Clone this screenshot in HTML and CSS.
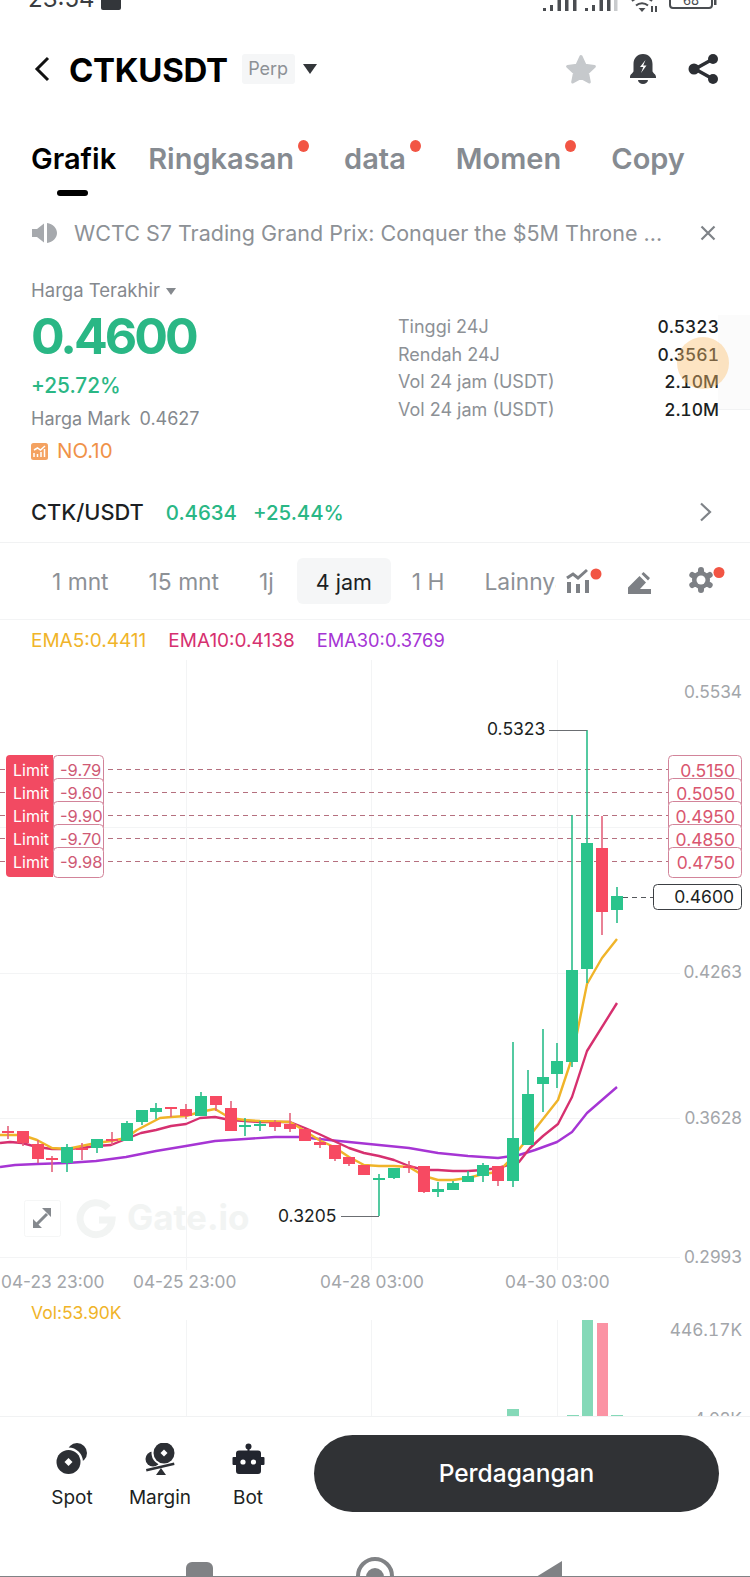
FILE: index.html
```html
<!DOCTYPE html>
<html lang="en">
<head>
  <meta charset="UTF-8" />
  <meta name="viewport" content="width=device-width, initial-scale=1.0"/>
  <title>CTKUSDT</title>
  <link rel="stylesheet" href="styles.css">
</head>

<body>
  <div class="page">
    <div class="status">
      <span class="status-time">23:54</span>
      <span class="status-note"></span>
      <svg class="status-icons" width="174" height="12" viewBox="0 0 174 12">
        <path class="status-fill" d="M0 8h3v3H0zM7 5h3v6H7zM14.500 0h3.500v11h-3.500zM22 0h3.500v11H22zM30 0h3.500v11H30zM42 8h3v3h-3zM49 5h3v6h-3zM56.500 0h3.500v11h-3.500zM64 0h3.500v11H64z"/>
        <path class="status-faint" d="M71 0h3.500v11H71z"/>
        <path class="status-line" d="M89 1a16 16 0 0 1 20 0M93 5.500a9 9 0 0 1 12 0"/>
        <path class="status-fill" d="M95.500 8h7l-3.500 4zM108 6h2v6h-2zM112 6h2v6h-2z"/>
        <path class="status-line" d="M130 -3h36a3 3 0 0 1 3 3v5a3 3 0 0 1-3 3h-36a3 3 0 0 1-3-3v-5a3 3 0 0 1 3-3z"/>
        <path class="status-fill" d="M171 0h2.500v5H171z"/>
        <text class="status-batt" x="148" y="5">68</text>
      </svg>
    </div>

    <header class="topbar">
      <svg class="back" width="18" height="26" viewBox="0 0 18 26"><path d="M15 2L4 13l11 11"/></svg>
      <h1 class="symbol">CTKUSDT</h1>
      <span class="chip">Perp</span>
      <span class="caret"></span>
      <div class="topbar-icons">
        <svg width="34" height="32" viewBox="0 0 34 32"><path class="star" d="M17 3.500l4 8.700 9.400 1.200-6.900 6.400 1.800 9.200-8.300-4.600-8.300 4.600 1.800-9.200-6.900-6.400 9.400-1.200z"/></svg>
        <svg width="28" height="30" viewBox="0 0 28 30"><path class="bell" d="M14 0c6 0 9.500 4.500 9.500 10v7c0 2 3.500 3 3.500 6v1H1v-1c0-3 3.500-4 3.500-6v-7C4.500 4.500 8 0 14 0zM9 26h10a5 4 0 0 1-10 0z"/><path class="bolt" d="M16.500 6l-5.500 7h3.300L12 19l5.500-7.500h-3.300z"/></svg>
        <svg width="30" height="30" viewBox="0 0 30 30"><path class="share-line" d="M25 5L7 15l18 10"/><circle class="dark" cx="25" cy="5" r="5"/><circle class="dark" cx="6" cy="15" r="5.500"/><circle class="dark" cx="25" cy="25" r="5"/></svg>
      </div>
    </header>

    <nav class="tabs">
      <a class="tab tab-active">Grafik</a>
      <a class="tab tab-dot">Ringkasan</a>
      <a class="tab tab-dot">data</a>
      <a class="tab tab-dot">Momen</a>
      <a class="tab">Copy</a>
    </nav>

    <div class="notice">
      <svg width="25" height="20" viewBox="0 0 25 20"><path class="speaker" d="M0 6h5l7-5.500v19L5 14H0zM15 0c6 1 10 5 10 10s-4 9-10 10z"/></svg>
      <span class="notice-text">WCTC S7 Trading Grand Prix: Conquer the $5M Throne ...</span>
      <svg class="notice-close" width="16" height="16" viewBox="0 0 16 16"><path d="M1.500 1.500l13 13M14.500 1.500l-13 13"/></svg>
    </div>

    <section class="market">
      <div class="price-col">
        <div class="price-label">Harga Terakhir <span class="caret caret-small"></span></div>
        <div class="price">0.4600</div>
        <div class="change">+25.72%</div>
        <div class="mark">Harga Mark<span class="mark-value">0.4627</span></div>
        <div class="rank">
          <svg width="17" height="17" viewBox="0 0 17 17"><rect class="rank-bg" width="17" height="17" rx="2.500"/><path class="rank-bars" d="M3 14v-4M6.500 14v-3M10 14V9M13.500 14V6M3 7l3.500-2 3 2 4.500-4"/></svg>
          NO.10
        </div>
      </div>
      <div class="stats">
        <div class="stat"><span>Tinggi 24J</span><b>0.5323</b></div>
        <div class="stat"><span>Rendah 24J</span><b>0.3561</b></div>
        <div class="stat"><span>Vol 24 jam (USDT)</span><b>2.10M</b></div>
        <div class="stat"><span>Vol 24 jam (USDT)</span><b>2.10M</b></div>
      </div>
    </section>

    <div class="pair">
      <span class="pair-name">CTK/USDT</span>
      <span class="pair-value">0.4634</span>
      <span class="pair-value">+25.44%</span>
      <svg class="pair-arrow" width="13" height="20" viewBox="0 0 13 20"><path d="M2 1.500L11 10l-9 8.500"/></svg>
    </div>

    <div class="periods">
      <div class="period-list">
        <span class="period">1 mnt</span>
        <span class="period">15 mnt</span>
        <span class="period">1j</span>
        <span class="period period-active">4 jam</span>
        <span class="period">1 H</span>
        <span class="period">Lainnya</span>
      </div>
      <div class="period-tools">
        <svg class="tool-bars" width="38" height="26" viewBox="0 0 38 26"><path class="tool-line" d="M1 10l6-4 5 4 9-8"/><path class="tool-bar" d="M1 14h4v11H1zM10 16h4v9h-4zM19 12h4v13h-4z"/><circle class="dot" cx="30" cy="6" r="5.500"/></svg>
        <svg class="tool-pen" width="24" height="22" viewBox="0 0 24 22"><path class="tool-bar" d="M0 22v-6.500L11.500 4l6.500 6.500-6 6.500h11v5zM13.500 2L15.500 0 22 6l-2 2.500z"/></svg>
        <svg class="tool-gear" width="38" height="26" viewBox="0 0 38 26"><path class="tool-teeth" d="M12 3v20M3.300 8l17.400 10M3.300 18l17.400-10"/><circle class="tool-bar" cx="12" cy="13" r="9"/><circle class="bolt" cx="12" cy="13" r="4.500"/><circle class="dot" cx="30" cy="5.500" r="5.500"/></svg>
      </div>
    </div>

    <div class="ema">
      <span class="ema5">EMA5:0.4411</span>
      <span class="ema10">EMA10:0.4138</span>
      <span class="ema30">EMA30:0.3769</span>
    </div>

    <svg class="chart" width="750" height="756" viewBox="0 660 750 756">
      <path class="grid" d="M186.500 660V1270M371.500 660V1270M557.500 660V1270M186.500 1320V1416M371.500 1320V1416M557.500 1320V1416M0 827.500H680M0 973.500H680M0 1118.500H680M0 1257.500H680"/>

      <text class="watermark" x="127" y="1230">Gate.io</text>
      <path class="watermark-logo" d="M108 1208a16 16 0 1 0 4 12h-13"/>
      <rect class="expand-box" x="24.500" y="1200.500" width="36" height="36" rx="2"/>
      <path class="expand-stem" d="M37 1224l10-10"/>
      <path class="expand-head" d="M42 1208h9v9zM33 1219v9h9z"/>

      <path class="limit-line" d="M0 769.500H668M0 792.500H668M0 815.500H668M0 838.500H668M0 861.500H668"/>

      <polyline class="line-ema30" points="0,1167 15,1165 37,1164 67,1163 96,1161 126,1157 156,1151 186,1146 215,1141 245,1139 275,1137 300,1137 319,1139 349,1142 379,1145 409,1148 438,1153 468,1156 498,1158 519,1155 535,1150 557,1142 572,1132 587,1113 617,1087"/>
      <polyline class="line-ema10" points="0,1143 10,1142 22,1143 37,1147 52,1149 67,1149 81,1148 96,1146 111,1145 126,1139 141,1133 156,1130 171,1126 186,1124 200,1118 215,1117 230,1120 245,1121 260,1122 290,1122 305,1128 319,1134 334,1141 349,1148 364,1153 379,1156 394,1160 409,1166 424,1170 438,1170 453,1171 468,1171 483,1170 498,1168 519,1162 530,1148 543,1136 558,1124 572,1097 587,1051 617,1003"/>
      <polyline class="line-ema5" points="0,1135 22,1135 37,1140 52,1148 67,1149 96,1143 111,1141 126,1138 137,1130 160,1118 171,1117 186,1116 200,1112 215,1109 230,1118 245,1120 260,1121 290,1122 305,1131 319,1140 334,1147 349,1157 364,1165 379,1166 394,1166 409,1167 424,1176 438,1180 453,1180 468,1178 483,1174 498,1172 513,1157 528,1138 543,1119 558,1100 572,1058 587,984 602,958 617,939"/>

      <path class="wick-up" d="M67 1144V1172M97 1139V1153M127 1121V1141M142 1110V1125M156 1103V1119M201 1092V1116M245 1118V1136M260 1121V1131M379 1174V1216M394 1168V1179M438 1182V1197M453 1181V1190M468 1171V1182M483 1163V1182M513 1042V1187M528 1070V1145M543 1029V1112M557 1043V1088M572 815V1067M587 730V983M617 887V923"/>
      <path class="wick-down" d="M8 1126V1139M23 1131V1146M38 1140V1163M52 1156V1172M82 1143V1160M112 1132V1145M171 1107V1117M186 1104V1119M216 1096V1111M231 1101V1131M275 1120V1131M290 1113V1132M320 1137V1148M335 1145V1161M349 1157V1166M409 1161V1173M424 1166V1193M498 1166V1186M602 816V935"/>
      <path class="body-up" d="M61 1147h12V1163h-12zM91 1139h12V1148h-12zM121 1123h12V1141h-12zM136 1110h12V1122h-12zM150 1108h12V1112h-12zM195 1096h12V1116h-12zM239 1125h12V1127h-12zM254 1124h12V1126h-12zM373 1178h12V1180h-12zM388 1168h12V1178h-12zM432 1189h12V1192h-12zM447 1183h12V1190h-12zM462 1176h12V1182h-12zM477 1165h12V1176h-12zM507 1138h12V1181h-12zM522 1094h12V1145h-12zM537 1077h12V1084h-12zM551 1061h12V1074h-12zM566 970h12V1062h-12zM581 843h12V969h-12zM611 896h12V910h-12z"/>
      <path class="body-down" d="M2 1131h12V1133H2zM17 1131h12V1143H17zM32 1144h12V1159H32zM46 1158h12V1160H46zM76 1148h12V1150H76zM106 1139h12V1141h-12zM165 1107h12V1109h-12zM180 1109h12V1116h-12zM210 1096h12V1105h-12zM225 1108h12V1131h-12zM269 1122h12V1127h-12zM284 1124h12V1129h-12zM299 1129h12V1141h-12zM314 1142h12V1145h-12zM329 1145h12V1159h-12zM343 1157h12V1164h-12zM358 1165h12V1175h-12zM403 1166h12V1168h-12zM418 1166h12V1192h-12zM492 1166h12V1181h-12zM596 848h12V912h-12z"/>

      <path class="extreme" d="M549 730.500H587M341 1216.500H379"/>
      <text class="label-dark" x="487" y="735">0.5323</text>
      <text class="label-dark" x="278" y="1222">0.3205</text>

      <rect class="limit-box" x="53.500" y="755.500" width="50" height="30" rx="4"/>
      <rect class="limit-box" x="53.500" y="778.500" width="50" height="30" rx="4"/>
      <rect class="limit-box" x="53.500" y="801.500" width="50" height="30" rx="4"/>
      <rect class="limit-box" x="53.500" y="824.500" width="50" height="30" rx="4"/>
      <rect class="limit-box" x="53.500" y="847.500" width="50" height="30" rx="4"/>
      <path class="limit-tag" d="M10 755h43v122H10a4 4 0 0 1-4-4V759a4 4 0 0 1 4-4z"/>
      <text class="limit-name" x="13" y="776">Limit</text>
      <text class="limit-name" x="13" y="799">Limit</text>
      <text class="limit-name" x="13" y="822">Limit</text>
      <text class="limit-name" x="13" y="845">Limit</text>
      <text class="limit-name" x="13" y="868">Limit</text>
      <text class="limit-num" x="60" y="776">-9.79</text>
      <text class="limit-num" x="60" y="799">-9.60</text>
      <text class="limit-num" x="60" y="822">-9.90</text>
      <text class="limit-num" x="60" y="845">-9.70</text>
      <text class="limit-num" x="60" y="868">-9.98</text>

      <rect class="limit-box" x="668.500" y="755.500" width="73" height="30" rx="4"/>
      <rect class="limit-box" x="668.500" y="778.500" width="73" height="30" rx="4"/>
      <rect class="limit-box" x="668.500" y="801.500" width="73" height="30" rx="4"/>
      <rect class="limit-box" x="668.500" y="824.500" width="73" height="30" rx="4"/>
      <rect class="limit-box" x="668.500" y="847.500" width="73" height="30" rx="4"/>
      <text class="limit-price" x="735" y="777">0.5150</text>
      <text class="limit-price" x="735" y="800">0.5050</text>
      <text class="limit-price" x="735" y="823">0.4950</text>
      <text class="limit-price" x="735" y="846">0.4850</text>
      <text class="limit-price" x="735" y="869">0.4750</text>

      <path class="last-line" d="M623 897.500H653"/>
      <rect class="last-box" x="653.500" y="884.500" width="88" height="25" rx="4"/>
      <text class="last-price" x="734" y="903">0.4600</text>

      <text class="axis axis-end" x="742" y="698">0.5534</text>
      <text class="axis axis-end" x="742" y="978">0.4263</text>
      <text class="axis axis-end" x="742" y="1124">0.3628</text>
      <text class="axis axis-end" x="742" y="1263">0.2993</text>
      <text class="axis" x="1" y="1288">04-23 23:00</text>
      <text class="axis" x="133" y="1288">04-25 23:00</text>
      <text class="axis" x="320" y="1288">04-28 03:00</text>
      <text class="axis" x="505" y="1288">04-30 03:00</text>

      <text class="vol-label" x="31" y="1319">Vol:53.90K</text>
      <text class="axis axis-end axis-tab" x="742" y="1336">446.17K</text>
      <text class="axis axis-end" x="742" y="1425">4.02K</text>
      <path class="vol-up" d="M507 1409h12v7h-12zM567 1415h12v1h-12zM582 1320h11v96h-11zM611 1415h12v1h-12z"/>
      <path class="vol-down" d="M597 1323h11v93h-11z"/>
    </svg>

    <footer class="actions">
      <a class="action">
        <svg width="32" height="32" viewBox="0 0 32 32">
          <circle class="dark" cx="21" cy="10" r="10"/>
          <circle class="bolt" cx="12.500" cy="19" r="14.500"/>
          <circle class="dark" cx="12.500" cy="19" r="12"/>
          <path class="bolt" d="M12.500 15l4 4-4 4-4-4z"/>
        </svg>
        <span>Spot</span>
      </a>
      <a class="action">
        <svg width="32" height="32" viewBox="0 0 32 32">
          <circle class="dark" cx="9" cy="16" r="7.500"/>
          <circle class="bolt" cx="20" cy="10" r="12.500"/>
          <circle class="dark" cx="20" cy="10" r="10.500"/>
          <path class="bolt" d="M20 6.500l3.500 3.500-3.500 3.500-3.500-3.500z"/>
          <path class="bolt" d="M0 27l32-8.500v5L0 32z"/>
          <path class="dark" d="M2 26l28-6.500.5 2.500-28 6.500zM17 25l5 7H12z"/>
        </svg>
        <span>Margin</span>
      </a>
      <a class="action">
        <svg width="33" height="32" viewBox="0 0 33 32">
          <circle class="robot" cx="16.500" cy="3.500" r="3"/>
          <path class="robot" d="M15.500 5h2v4h-2zM7 7.500h19a3 3 0 0 1 3 3V14h2.500a1 1 0 0 1 1 1v6a1 1 0 0 1-1 1H29v6a3 3 0 0 1-3 3H7a3 3 0 0 1-3-3v-6H1.500a1 1 0 0 1-1-1v-6a1 1 0 0 1 1-1H4v-3.500a3 3 0 0 1 3-3z"/>
          <circle class="bolt" cx="11" cy="19" r="2.600"/>
          <circle class="bolt" cx="21.500" cy="19" r="2.600"/>
        </svg>
        <span>Bot</span>
      </a>
      <a class="trade">Perdagangan</a>
    </footer>

    <svg class="navbar" width="750" height="21" viewBox="0 0 750 21">
      <path class="nav-fill" d="M192 6h15a6 6 0 0 1 6 6v9h-27v-9a6 6 0 0 1 6-6z"/>
      <circle class="nav-ring" cx="375" cy="20" r="17"/>
      <circle class="nav-fill" cx="375" cy="21" r="9"/>
      <path class="nav-fill" d="M562 5v16h-26z"/>
      <path class="nav-base" d="M0 20.500H750"/>
    </svg>

    <div class="touch-box"></div>
    <div class="touch"></div>
  </div>
</body>
</html>
```

FILE: styles.css
```css
* {
  box-sizing: border-box;
}

body {
  margin: 0;
  background-color: #ffffff;
  font-family: 'Inter', 'Liberation Sans', sans-serif;
  color: #1c1f23;
}

.page {
  position: relative;
  width: 750px;
  height: 1577px;
  overflow: hidden;
}

/* status bar, cut by the top of the shot */
.status {
  height: 12px;
  overflow: hidden;
  display: flex;
  align-items: flex-start;
  padding: 0 33px 0 28px;
  color: #3a3d41;
}

.status-time {
  font-size: 24px;
  line-height: 24px;
  margin-top: -13px;
}

.status-note {
  width: 20px;
  height: 10px;
  margin-left: 7px;
  background-color: #33363a;
  border-radius: 0 0 2px 2px;
}

.status-icons {
  margin-left: auto;
}

.status-fill {
  fill: #4a4d51;
}

.status-faint {
  fill: #c9cbcd;
}

.status-line {
  fill: none;
  stroke: #4a4d51;
  stroke-width: 2;
}

.status-batt {
  font-size: 13px;
  text-anchor: middle;
  fill: #4a4d51;
}

/* top bar */
.topbar {
  height: 113px;
  display: flex;
  align-items: center;
  padding: 0 32px 0 33px;
}

.back {
  fill: none;
  stroke: #111111;
  stroke-width: 3;
}

.symbol {
  margin: 2px 0 0 18px;
  font-size: 33px;
  font-weight: 700;
  letter-spacing: -0.3px;
  color: #000000;
}

.chip {
  margin-left: 14px;
  width: 53px;
  height: 30px;
  line-height: 30px;
  text-align: center;
  font-size: 18px;
  color: #8d9196;
  background-color: #f5f6f7;
  border-radius: 3px;
}

.caret {
  margin-left: 8px;
  width: 0;
  height: 0;
  border-left: 7px solid transparent;
  border-right: 7px solid transparent;
  border-top: 10px solid #33363a;
}

.caret-small {
  display: inline-block;
  margin-left: 1px;
  border-left-width: 5px;
  border-right-width: 5px;
  border-top: 7px solid #85898e;
  vertical-align: 2px;
}

.topbar-icons {
  margin-left: auto;
  display: flex;
  align-items: center;
  gap: 31px;
}

.star {
  fill: #c6c9cc;
  stroke: #c6c9cc;
  stroke-width: 3;
  stroke-linejoin: round;
}

.bell {
  fill: #3a3d42;
}

.dark {
  fill: #2c2f34;
}

.robot {
  fill: #22252e;
}

.bolt {
  fill: #ffffff;
}

.share-line {
  fill: none;
  stroke: #2c2f34;
  stroke-width: 3.5;
}

/* tabs */
.tabs {
  height: 72px;
  display: flex;
  gap: 32px;
  padding: 17px 0 0 31px;
}

.tab {
  position: relative;
  height: 34px;
  line-height: 34px;
  font-size: 29px;
  font-weight: 600;
  color: #868b91;
}

.tab-active {
  color: #000000;
}

.tab-active::after {
  content: "";
  position: absolute;
  left: 26px;
  top: 48px;
  width: 31px;
  height: 6px;
  border-radius: 3px;
  background-color: #000000;
}

.tab-dot {
  margin-right: 18px;
}

.tab-dot::after {
  content: "";
  position: absolute;
  right: -15px;
  top: -2px;
  width: 11px;
  height: 12px;
  border-radius: 50%;
  background-color: #f25544;
}

/* notice */
.notice {
  height: 72px;
  display: flex;
  align-items: center;
  padding: 0 34px 0 32px;
}

.speaker {
  fill: #a6a9ad;
}

.notice-text {
  margin-left: 17px;
  font-size: 21.500px;
  color: #8d9196;
  white-space: nowrap;
}

.notice-close {
  margin-left: auto;
  fill: none;
  stroke: #7f8388;
  stroke-width: 2.2;
}

/* price block */
.market {
  height: 213px;
  display: flex;
  padding: 9px 31px 0 31px;
}

.price-col {
  width: 367px;
}

.price-label,
.mark {
  font-size: 18.500px;
  line-height: 24px;
  color: #85898e;
}

.price {
  margin-top: 6px;
  font-size: 50px;
  line-height: 56px;
  font-weight: 700;
  letter-spacing: -3px;
  color: #2ab785;
}

.change {
  margin-top: 9px;
  font-size: 20.800px;
  line-height: 26px;
  font-weight: 500;
  color: #2ab785;
}

.mark {
  margin-top: 8px;
  font-size: 18px;
}

.mark-value {
  margin-left: 9px;
}

.rank {
  margin-top: 8px;
  display: flex;
  align-items: center;
  gap: 9px;
  font-size: 20.500px;
  line-height: 24px;
  color: #f09248;
}

.rank-bg {
  fill: #f4a261;
}

.rank-bars {
  fill: none;
  stroke: #ffffff;
  stroke-width: 1.5;
}

.stats {
  flex: 1;
  padding-top: 35px;
}

.stat {
  display: flex;
  justify-content: space-between;
  font-size: 18px;
  line-height: 27.7px;
  color: #8d9196;
}

.stat b {
  font-size: 17.500px;
  font-weight: 500;
  font-variant-numeric: tabular-nums;
  color: #1c1f23;
}

/* spot pair */
.pair {
  height: 61px;
  display: flex;
  align-items: center;
  gap: 16px;
  padding: 0 38px 0 31px;
  border-bottom: 1px solid #f1f2f3;
  font-size: 20.400px;
}

.pair-name {
  margin-right: 6px;
  font-size: 21.800px;
  font-weight: 500;
}

.pair-value {
  font-weight: 500;
  color: #2ab785;
}

.pair-arrow {
  margin-left: auto;
  fill: none;
  stroke: #7f8388;
  stroke-width: 2.2;
}

/* periods */
.periods {
  height: 77px;
  display: flex;
  align-items: center;
  border-bottom: 1px solid #f3f4f5;
}

.period-list {
  width: 556px;
  overflow: hidden;
  display: flex;
  padding-left: 32px;
}

.period {
  flex-shrink: 0;
  height: 46px;
  line-height: 48px;
  padding: 0 20px;
  font-size: 22.800px;
  color: #8d9196;
}

.period-active {
  margin: 0 1px 0 3px;
  width: 94px;
  padding: 0;
  text-align: center;
  font-size: 21.500px;
  color: #1c1f23;
  background-color: #f5f6f7;
  border-radius: 6px;
}

.period-tools {
  display: flex;
  align-items: flex-start;
  margin-left: 10px;
}

.tool-bars {
  margin-top: -1px;
}

.tool-pen {
  margin: 3px 0 0 24px;
}

.tool-gear {
  margin: -2px 0 0 37px;
}

.tool-line {
  fill: none;
  stroke: #7d8085;
  stroke-width: 3;
}

.tool-bar {
  fill: #7d8085;
}

.tool-teeth {
  fill: none;
  stroke: #7d8085;
  stroke-width: 6;
  stroke-linecap: round;
}

.dot {
  fill: #f25544;
}

/* ema legend */
.ema {
  height: 40px;
  display: flex;
  align-items: center;
  gap: 22px;
  padding-left: 31px;
  font-size: 19px;
}

.ema5 {
  color: #f0b429;
}

.ema10 {
  color: #d6306f;
}

.ema30 {
  font-size: 18.300px;
  color: #a635d4;
}

/* chart */
.chart {
  display: block;
  overflow: hidden;
}

.chart text {
  font-family: 'Inter', 'Liberation Sans', sans-serif;
}

.grid {
  fill: none;
  stroke: #f3f4f5;
}

.chart .watermark {
  font-size: 35px;
  font-weight: 700;
  fill: #f2f4f3;
}

.watermark-logo {
  fill: none;
  stroke: #f2f4f3;
  stroke-width: 7;
}

.expand-box {
  fill: #ffffff;
  stroke: #f5f6f6;
}

.expand-stem {
  fill: none;
  stroke: #85898e;
  stroke-width: 3;
}

.expand-head {
  fill: #85898e;
}

.limit-line {
  fill: none;
  stroke: #b5707f;
  stroke-dasharray: 5 4;
}

.line-ema5,
.line-ema10,
.line-ema30 {
  fill: none;
  stroke-width: 2.4;
  stroke-linejoin: round;
}

.line-ema5 {
  stroke: #f0b429;
}

.line-ema10 {
  stroke: #d6306f;
}

.line-ema30 {
  stroke: #a635d4;
}

.wick-up,
.wick-down {
  fill: none;
  stroke-width: 1.6;
}

.wick-up {
  stroke: #2bbd8a;
}

.wick-down {
  stroke: #e4637c;
}

.body-up {
  fill: #2ac48c;
}

.body-down {
  fill: #f74a62;
}

.extreme {
  fill: none;
  stroke: #6b6e72;
}

.chart .label-dark,
.chart .last-price {
  font-size: 17.500px;
  fill: #1c1f23;
}

.limit-box {
  fill: #ffffff;
  stroke: #d2849a;
}

.limit-tag {
  fill: #f24a62;
}

.chart .limit-name {
  font-size: 16px;
  fill: #ffffff;
}

.chart .limit-num {
  font-size: 16.500px;
  fill: #cf5a75;
}

.chart .limit-price {
  font-size: 17.500px;
  text-anchor: end;
  fill: #d9566f;
}

.last-line {
  fill: none;
  stroke: #55585c;
  stroke-dasharray: 5 4;
}

.last-box {
  fill: #ffffff;
  stroke: #3c3f43;
}

.chart .last-price {
  text-anchor: end;
}

.chart .axis {
  font-size: 17.300px;
  fill: #a3a6aa;
}

.chart .axis-end {
  text-anchor: end;
}

.chart .axis-tab {
  font-variant-numeric: tabular-nums;
}

.chart .vol-label {
  font-size: 17.500px;
  fill: #f0b429;
}

.vol-up {
  fill: #85d9b8;
}

.vol-down {
  fill: #fb93a4;
}

/* bottom actions */
.actions {
  height: 140px;
  display: flex;
  align-items: flex-start;
  padding-left: 28px;
  background-color: #ffffff;
  border-top: 1px solid #f1f2f3;
}

.action {
  width: 88px;
  padding-top: 26px;
  display: flex;
  flex-direction: column;
  align-items: center;
  gap: 11px;
  font-size: 19px;
  line-height: 24px;
  color: #1c1f23;
}

.trade {
  margin: 18px 0 0 22px;
  width: 405px;
  height: 77px;
  line-height: 77px;
  text-align: center;
  border-radius: 39px;
  font-size: 24.500px;
  font-weight: 500;
  color: #ffffff;
  background-color: #303235;
}

/* android nav */
.navbar {
  display: block;
}

.nav-fill {
  fill: #808285;
}

.nav-ring {
  fill: none;
  stroke: #808285;
  stroke-width: 4;
}

.nav-base {
  stroke: #808285;
}

/* finger mark from the screen recording */
.touch-box {
  position: absolute;
  left: 718px;
  top: 315px;
  width: 32px;
  height: 95px;
  background-color: #fbfbfb;
  border-bottom: 1px solid #f1f2f3;
}

.touch {
  position: absolute;
  left: 677px;
  top: 337px;
  width: 52px;
  height: 52px;
  border-radius: 50%;
  background-color: rgba(250, 190, 110, 0.42);
}
```
